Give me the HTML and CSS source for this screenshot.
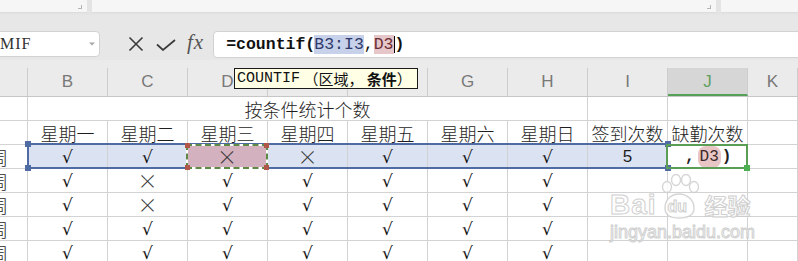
FILE: index.html
```html
<!DOCTYPE html>
<html lang="zh-CN">
<head>
<meta charset="utf-8">
<title>COUNTIF</title>
<link rel="stylesheet" href="styles.css">
</head>
<body>
<div class="app">
  <div class="topbar">
    <div class="tpanel p1"><span class="grip"></span></div>
    <div class="tpanel p2"><span class="grip"></span></div>
    <div class="tpanel p3"></div>
  </div>
  <div class="fbar">
    <div class="namebox">
      <span class="nbtext">MIF</span>
      <svg class="nbarrow" width="6" height="4" viewBox="0 0 6 4"><path d="M0 0.5 L6 0.5 L3 3.5 Z" fill="#a8a8a8"/></svg>
    </div>
    <div class="fbtns">
      <svg class="ic-x" width="16" height="16" viewBox="0 0 16 16"><path d="M1.5 1.5 L14.5 14.5 M14.5 1.5 L1.5 14.5" stroke="#3a3a3a" stroke-width="1.6" fill="none"/></svg>
      <svg class="ic-ok" width="20" height="12" viewBox="0 0 20 12"><path d="M1 5.5 L7 11 L19 1" stroke="#3a3a3a" stroke-width="1.7" fill="none"/></svg>
      <span class="fx">fx</span>
    </div>
    <div class="finput">
      <span class="f-bold">=countif(</span><span class="ref-b">B3:I3</span><span class="f-norm">,</span><span class="ref-d">D3</span><span class="caret"></span><span class="f-bold">)</span>
    </div>
  </div>
  <div class="sheet">
    <div class="colhead">
      <div class="h"></div>
      <div class="h">B</div>
      <div class="h">C</div>
      <div class="h">D</div>
      <div class="h">E</div>
      <div class="h">F</div>
      <div class="h">G</div>
      <div class="h">H</div>
      <div class="h">I</div>
      <div class="h h-act">J</div>
      <div class="h">K</div>
    </div>
    <div class="grid">
      <!-- row 1 -->
      <div class="c a"></div>
      <div class="c title">按条件统计个数</div>
      <div class="c"></div>
      <div class="c"></div>
      <div class="c"></div>
      <!-- row 2 -->
      <div class="c a"></div>
      <div class="c">星期一</div>
      <div class="c">星期二</div>
      <div class="c">星期三</div>
      <div class="c">星期四</div>
      <div class="c">星期五</div>
      <div class="c">星期六</div>
      <div class="c">星期日</div>
      <div class="c">签到次数</div>
      <div class="c">缺勤次数</div>
      <div class="c"></div>
      <!-- row 3 -->
      <div class="c a"><span>周</span></div>
      <div class="c sel"><span class="ck">√</span></div>
      <div class="c sel"><span class="ck">√</span></div>
      <div class="c sel-d"></div>
      <div class="c sel"><span class="xx">×</span></div>
      <div class="c sel"><span class="ck">√</span></div>
      <div class="c sel"><span class="ck">√</span></div>
      <div class="c sel"><span class="ck">√</span></div>
      <div class="c sel num">5</div>
      <div class="c edit"><span class="e-txt">,</span><span class="e-ref">D3</span><span class="e-txt">)</span></div>
      <div class="c"></div>
      <!-- row 4 -->
      <div class="c a"><span>周</span></div>
      <div class="c"><span class="ck">√</span></div>
      <div class="c"><span class="xx">×</span></div>
      <div class="c"><span class="ck">√</span></div>
      <div class="c"><span class="ck">√</span></div>
      <div class="c"><span class="ck">√</span></div>
      <div class="c"><span class="ck">√</span></div>
      <div class="c"><span class="ck">√</span></div>
      <div class="c"></div>
      <div class="c"></div>
      <div class="c"></div>
      <!-- row 5 -->
      <div class="c a"><span>周</span></div>
      <div class="c"><span class="ck">√</span></div>
      <div class="c"><span class="xx">×</span></div>
      <div class="c"><span class="ck">√</span></div>
      <div class="c"><span class="ck">√</span></div>
      <div class="c"><span class="ck">√</span></div>
      <div class="c"><span class="ck">√</span></div>
      <div class="c"><span class="ck">√</span></div>
      <div class="c"></div>
      <div class="c"></div>
      <div class="c"></div>
      <!-- row 6 -->
      <div class="c a"><span>周</span></div>
      <div class="c"><span class="ck">√</span></div>
      <div class="c"><span class="ck">√</span></div>
      <div class="c"><span class="ck">√</span></div>
      <div class="c"><span class="ck">√</span></div>
      <div class="c"><span class="ck">√</span></div>
      <div class="c"><span class="ck">√</span></div>
      <div class="c"><span class="ck">√</span></div>
      <div class="c"></div>
      <div class="c"></div>
      <div class="c"></div>
      <!-- row 7 -->
      <div class="c a"><span>周</span></div>
      <div class="c"><span class="ck">√</span></div>
      <div class="c"><span class="ck">√</span></div>
      <div class="c"><span class="ck">√</span></div>
      <div class="c"><span class="ck">√</span></div>
      <div class="c"><span class="ck">√</span></div>
      <div class="c"><span class="ck">√</span></div>
      <div class="c"><span class="ck">√</span></div>
      <div class="c"></div>
      <div class="c"></div>
      <div class="c"></div>
    </div>
    <div class="selframe">
      <span class="hd hd-tl"></span><span class="hd hd-bl"></span><span class="hd hd-tr"></span><span class="hd hd-br"></span>
    </div>
    <div class="antframe">
      <span class="xx">×</span>
      <span class="ad ad-tl"></span><span class="ad ad-tr"></span><span class="ad ad-bl"></span><span class="ad ad-br"></span>
    </div>
    <div class="editframe"><span class="gh"></span></div>
  </div>
  <div class="tooltip"><span class="tt-mono">COUNTIF</span> （区域， <b>条件</b>）</div>
  <div class="watermark">
    <div class="wm-top">
      <span class="wm-bai">Bai</span>
      <span class="wm-paw">
        <svg width="40" height="46" viewBox="0 0 40 46">
          <g fill="#ffffff" stroke="#cfcfcf" stroke-width="1.4">
            <ellipse cx="8" cy="13" rx="4.5" ry="5.5"/>
            <ellipse cx="17" cy="6" rx="4.5" ry="5.5"/>
            <ellipse cx="27" cy="6" rx="4.5" ry="5.5"/>
            <ellipse cx="35" cy="13" rx="4.5" ry="5.5"/>
            <path d="M6 34 C6 24 14 20 20 20 C27 20 35 25 35 34 C35 42 28 44 20 44 C12 44 6 42 6 34 Z"/>
          </g>
        </svg>
        <span class="wm-du">du</span>
      </span>
      <span class="wm-jy">经验</span>
    </div>
    <div class="wm-url">jingyan.baidu.com</div>
  </div>
</div>
</body>
</html>
```
FILE: styles.css
```css
* { box-sizing: border-box; }
html, body { margin: 0; padding: 0; }
body {
  width: 798px;
  height: 261px;
  overflow: hidden;
  background: #ffffff;
  font-family: "Noto Sans CJK SC", sans-serif;
}
.app {
  position: relative;
  width: 798px;
  height: 261px;
  overflow: hidden;
}

/* top strip */
.topbar {
  display: flex;
  height: 15px;
  background: #e4e4e4;
  gap: 5px;
}
.tpanel {
  position: relative;
  height: 13px;
  background: #f6f6f6;
  border-bottom: 1px solid #dcdcdc;
}
.p1 { width: 87px; }
.p2 { width: 624px; }
.p3 { flex: 1; }
.grip {
  position: absolute;
  right: 5px;
  bottom: 3px;
  width: 4px;
  height: 4px;
  border-right: 1px solid #b4b4b4;
  border-bottom: 1px solid #b4b4b4;
}

/* formula bar */
.fbar {
  display: flex;
  align-items: flex-start;
  height: 45px;
  padding-top: 16px;
  background: #e7e7e7;
}
.namebox {
  display: flex;
  align-items: center;
  justify-content: space-between;
  margin-left: -12px;
  width: 112px;
  height: 26px;
  padding: 0 3px 0 11px;
  background: #ffffff;
  border: 1px solid #d2d2d2;
  border-radius: 4px;
}
.nbtext {
  font-family: "Liberation Serif", serif;
  font-size: 16px;
  color: #333;
  letter-spacing: 1px;
}
.nbarrow { margin-right: 1px; }
.fbtns {
  display: flex;
  align-items: center;
  height: 26px;
  margin-left: 28px;
}
.ic-x { margin-right: 12px; }
.ic-ok { margin-right: 11px; margin-top: 2px; }
.fx {
  font-family: "Liberation Serif", serif;
  font-style: italic;
  font-size: 21px;
  color: #555;
  line-height: 1;
  margin-top: -3px;
  letter-spacing: 1px;
}
.finput {
  display: flex;
  align-items: center;
  flex: 1;
  height: 27px;
  margin-left: 9px;
  margin-right: -6px;
  padding-left: 12px;
  background: #ffffff;
  border: 1px solid #d2d2d2;
  border-radius: 4px 0 0 4px;
  font-family: "Liberation Mono", monospace;
  font-size: 16.5px;
  color: #111;
}
.f-bold { font-weight: bold; }
.f-norm { font-weight: normal; }
.ref-b {
  background: #c7d1ea;
  color: #2f3a6a;
  height: 19px;
  display: inline-flex;
  align-items: center;
  margin-left: -1px;
}
.ref-d {
  background: #e6c7c9;
  color: #6b2c34;
  height: 19px;
  display: inline-flex;
  align-items: center;
}
.caret {
  display: inline-block;
  width: 1px;
  height: 17px;
  background: #000;
}

/* sheet */
.sheet { position: relative; }
.colhead {
  display: grid;
  grid-template-columns: 28px repeat(9, 80px) 50px;
  height: 37px;
  background: #ebebeb;
  border-bottom: 1px solid #c6c6c6;
  align-items: end;
}
.h {
  height: 28px;
  display: flex;
  align-items: center;
  justify-content: center;
  border-right: 1px solid #cdcdcd;
  font-family: "Liberation Sans", sans-serif;
  font-size: 17px;
  color: #787878;
}
.h-act {
  background: #d6d6d6;
  color: #5f9f5f;
  border-bottom: 2px solid #57a057;
  padding-top: 2px;
}

.grid {
  display: grid;
  grid-template-columns: 28px repeat(9, 80px) 50px;
  grid-auto-rows: 24px;
}
.c {
  display: flex;
  align-items: center;
  justify-content: center;
  border-right: 1px solid #d3d3d3;
  border-bottom: 1px solid #d3d3d3;
  font-size: 18px;
  line-height: 22px;
  font-weight: 300;
  color: #1e1e1e;
  white-space: nowrap;
}
.a {
  justify-content: flex-end;
  overflow: hidden;
  padding-right: 19px;
}
.title { grid-column: span 7; }
.ck {
  font-family: "DejaVu Sans", sans-serif;
  font-size: 17px;
  line-height: 20px;
  font-weight: 400;
  color: #111;
}
.xx {
  font-family: "Noto Sans CJK SC", sans-serif;
  font-size: 20px;
  line-height: 20px;
  font-weight: 200;
  color: #333;
}
.num { font-family: "Liberation Sans", sans-serif; font-size: 17px; }
.sel { background: #dbe2f2; }
.sel-d { background: #d3b1be; }
.edit {
  justify-content: flex-start;
  padding-left: 17px;
  font-family: "Liberation Mono", monospace;
  font-size: 16px;
  font-weight: bold;
}
.e-txt { font-weight: bold; }
.e-ref {
  background: #e8c6c6;
  border-radius: 8px;
  padding: 0 2px;
  margin: 0 1px 0 3px;
  font-weight: normal;
  color: #3a2a2a;
}

/* selection overlays */
.selframe {
  position: absolute;
  left: 27px;
  top: 83px;
  width: 641px;
  height: 26px;
  border-top: 2px solid #4e6ba4;
  border-bottom: 2px solid #4e6ba4;
  border-left: 2px solid #4e6ba4;
}
.hd {
  position: absolute;
  width: 6px;
  height: 6px;
  background: #4e6ba4;
}
.hd-tl { left: -4px; top: -4px; }
.hd-bl { left: -4px; bottom: -4px; }
.hd-tr { right: -3px; top: -4px; }
.hd-br { right: -3px; bottom: -4px; }

.antframe {
  position: absolute;
  left: 186px;
  top: 84px;
  width: 82px;
  height: 25px;
  display: flex;
  align-items: center;
  justify-content: center;
  border: 2px dashed #5f8a45;
  background: linear-gradient(#d3b1be, #d3b1be) padding-box, #ffffff border-box;
}
.ad {
  position: absolute;
  width: 5px;
  height: 5px;
  background: #b0574a;
}
.ad-tl { left: -3px; top: -3px; }
.ad-tr { right: -3px; top: -3px; }
.ad-bl { left: -3px; bottom: -3px; }
.ad-br { right: -3px; bottom: -3px; }

.editframe {
  position: absolute;
  left: 666px;
  top: 84px;
  width: 82px;
  height: 25px;
  border: 2px solid #5a9e55;
}
.gh {
  position: absolute;
  right: -4px;
  bottom: -4px;
  width: 6px;
  height: 6px;
  background: #4caf50;
}

/* tooltip */
.tooltip {
  position: absolute;
  left: 234px;
  top: 68px;
  width: 184px;
  height: 21px;
  display: flex;
  align-items: center;
  padding-left: 2px;
  background: #ffffe6;
  border: 1px solid #1a1a1a;
  font-size: 15px;
  line-height: 18px;
  color: #111;
  white-space: pre;
}
.tt-mono {
  font-family: "Liberation Mono", monospace;
  font-size: 15px;
}
.tooltip b { font-weight: 700; }

/* watermark */
.watermark {
  position: absolute;
  left: 610px;
  top: 174px;
  width: 150px;
  opacity: 0.85;
}
.wm-top {
  display: flex;
  align-items: flex-end;
  height: 46px;
}
.wm-bai, .wm-jy, .wm-du, .wm-url {
  color: #ffffff;
  -webkit-text-stroke: 1px #c8c8c8;
  font-family: "Liberation Sans", sans-serif;
  font-weight: bold;
}
.wm-bai { font-size: 28px; line-height: 30px; letter-spacing: 1px; }
.wm-paw { position: relative; width: 42px; height: 46px; margin-left: 2px; }
.wm-paw svg { position: absolute; left: 0; top: 0; }
.wm-du {
  position: absolute;
  left: 9px;
  top: 24px;
  font-size: 16px;
  line-height: 18px;
}
.wm-jy {
  font-family: "Noto Sans CJK SC", sans-serif;
  font-size: 23px;
  line-height: 30px;
  margin-left: 4px;
}
.wm-url {
  font-size: 18px;
  line-height: 20px;
  margin-top: 2px;
  font-weight: normal;
}
```
